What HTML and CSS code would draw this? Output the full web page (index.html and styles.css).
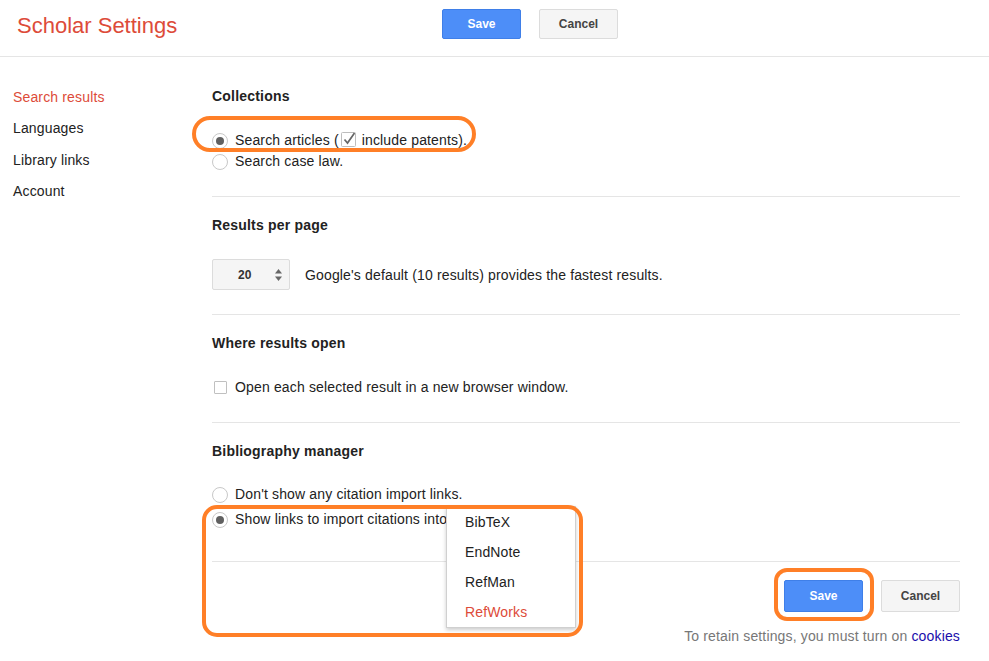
FILE: index.html
```html
<!DOCTYPE html>
<html lang="en">
<head>
<meta charset="utf-8">
<title>Scholar Settings</title>
<link rel="stylesheet" href="styles.css">
</head>
<body>
<header class="hdr">
  <h1 class="title">Scholar Settings</h1>
  <div class="btns">
    <button class="btn btn-primary">Save</button>
    <button class="btn">Cancel</button>
  </div>
</header>
<div class="layout">
  <nav class="side">
    <a class="side-link active" href="#">Search results</a>
    <a class="side-link" href="#">Languages</a>
    <a class="side-link" href="#">Library links</a>
    <a class="side-link" href="#">Account</a>
  </nav>
  <main class="main">
    <section class="sec sec-first">
      <h2 class="sec-title">Collections</h2>
      <div class="row marked">
        <span class="radio checked"></span>
        <span class="lbl">Search articles (<svg class="cb-inline" width="15" height="15" viewBox="0 0 15 15"><rect x="0.5" y="0.5" width="14" height="14" rx="1" fill="#fff" stroke="#bdbdbd"/><path d="M3.5 7.5 L6.5 11 L13.5 1" fill="none" stroke="#666" stroke-width="1.7"/></svg>&nbsp;include patents).</span>
        <span class="ring ring-1"></span>
      </div>
      <div class="row">
        <span class="radio"></span>
        <span class="lbl">Search case law.</span>
      </div>
    </section>

    <section class="sec">
      <h2 class="sec-title">Results per page</h2>
      <div class="sel-row">
        <div class="sel">
          <span class="sel-val">20</span>
          <svg class="spin" width="7" height="14" viewBox="0 0 7 14"><path d="M0 5.5 L3.5 1 L7 5.5 Z" fill="#666"/><path d="M0 8.5 L3.5 13 L7 8.5 Z" fill="#666"/></svg>
        </div>
        <span class="lbl">Google's default (10 results) provides the fastest results.</span>
      </div>
    </section>

    <section class="sec">
      <h2 class="sec-title">Where results open</h2>
      <div class="row">
        <span class="cbox"></span>
        <span class="lbl">Open each selected result in a new browser window.</span>
      </div>
    </section>

    <section class="sec sec-last">
      <h2 class="sec-title">Bibliography manager</h2>
      <div class="row">
        <span class="radio"></span>
        <span class="lbl">Don't show any citation import links.</span>
      </div>
      <div class="row row-gap marked">
        <span class="radio checked"></span>
        <span class="lbl">Show links to import citations into</span>
        <ul class="menu">
          <li class="menu-item">BibTeX</li>
          <li class="menu-item">EndNote</li>
          <li class="menu-item">RefMan</li>
          <li class="menu-item menu-item-sel">RefWorks</li>
        </ul>
        <span class="ring ring-2"></span>
      </div>
    </section>

    <div class="actions">
      <div class="marked">
        <button class="btn btn-primary btn-lg">Save</button>
        <span class="ring ring-3"></span>
      </div>
      <button class="btn btn-lg">Cancel</button>
    </div>
    <p class="note">To retain settings, you must turn on <a class="note-link" href="#">cookies</a></p>
  </main>
</div>
</body>
</html>
```

FILE: styles.css
```css
* { box-sizing: border-box; }

body {
  margin: 0;
  background: #fff;
  color: #222;
  font-family: "Liberation Sans", Arial, sans-serif;
  font-size: 14px;
  letter-spacing: 0.15px;
}

/* header */
.hdr {
  display: flex;
  align-items: flex-start;
  height: 57px;
  padding-top: 9px;
  border-bottom: 1px solid #e5e5e5;
}
.title {
  width: 442px;
  margin: 4px 0 0;
  padding-left: 17px;
  font-size: 22px;
  line-height: 25px;
  font-weight: normal;
  letter-spacing: 0;
  color: #dd4b39;
}
.btns {
  display: flex;
  gap: 18px;
}
.btn {
  width: 79px;
  height: 30px;
  border: 1px solid #dcdcdc;
  border-radius: 2px;
  background: #f5f5f5;
  color: #444;
  font-family: "Liberation Sans", Arial, sans-serif;
  font-size: 12px;
  font-weight: bold;
  padding: 0;
}
.btn-primary {
  background: #4d8ef8;
  border-color: #3f7fe8;
  color: #fff;
}
.btn-lg { height: 32px; }

/* layout */
.layout {
  display: flex;
}
.side {
  width: 212px;
  flex: none;
  padding: 25px 0 0 13px;
}
.side-link {
  display: block;
  line-height: 31.3px;
  color: #222;
  text-decoration: none;
}
.side-link.active { color: #dd4b39; }

.main {
  width: 748px;
  padding-top: 31px;
}

.sec {
  border-bottom: 1px solid #e5e5e5;
  padding: 20px 0 24px;
}
.sec-first { padding-top: 0; }
.sec-last { padding-bottom: 31px; }

.sec-title {
  margin: 0 0 26px;
  font-size: 14px;
  line-height: 16px;
  font-weight: bold;
  letter-spacing: 0.2px;
  color: #222;
}
.sec-last .sec-title { margin-bottom: 25px; }

.row {
  display: flex;
  align-items: center;
  height: 21px;
  line-height: 21px;
}
.row-gap { margin-top: 4px; }
.lbl { white-space: nowrap; }

.radio {
  width: 16px;
  height: 16px;
  flex: none;
  margin-right: 7px;
  border: 1px solid #c8c8c8;
  border-radius: 50%;
  background: #fff;
  display: flex;
  align-items: center;
  justify-content: center;
}
.radio.checked::after {
  content: "";
  width: 8px;
  height: 8px;
  border-radius: 50%;
  background: #606060;
}

.cb-inline {
  vertical-align: -2px;
  margin: 0 2px 0 2px;
  overflow: visible;
}

.cbox {
  width: 13px;
  height: 13px;
  flex: none;
  margin: 0 8px 0 2px;
  border: 1px solid #c0c0c0;
  border-radius: 1px;
  background: #fff;
}

/* select */
.sel-row {
  display: flex;
  align-items: center;
  gap: 15px;
}
.sel {
  width: 78px;
  height: 31px;
  display: flex;
  align-items: center;
  padding-left: 25px;
  border: 1px solid #dcdcdc;
  border-radius: 2px;
  background: #f5f5f5;
}
.sel-val {
  font-size: 12px;
  font-weight: bold;
  color: #333;
  width: 37px;
}
.spin { display: block; }

/* dropdown menu */
.marked { position: relative; }
.menu {
  position: absolute;
  left: 234px;
  top: -3px;
  width: 130px;
  margin: 0;
  padding: 0;
  list-style: none;
  background: #fff;
  border: 1px solid #d0d0d0;
  box-shadow: 0 2px 4px rgba(0, 0, 0, 0.2);
  z-index: 2;
}
.menu-item {
  height: 30px;
  line-height: 30px;
  padding-left: 18px;
  color: #222;
}
.menu-item-sel { color: #dd4b39; }

/* annotation rings */
.ring {
  position: absolute;
  border: 4px solid #ff7f27;
  pointer-events: none;
  z-index: 3;
}
.ring-1 {
  left: -20px;
  top: -14px;
  width: 284px;
  height: 36px;
  border-radius: 18px;
}
.ring-2 {
  left: -10px;
  top: -4px;
  width: 381px;
  height: 132px;
  border-radius: 15px;
}
.ring-3 {
  left: -10px;
  top: -12px;
  width: 100px;
  height: 53px;
  border-radius: 13px;
}

/* bottom actions */
.actions {
  display: flex;
  justify-content: flex-end;
  gap: 18px;
  margin-top: 18px;
}
.actions .marked { display: flex; }

.note {
  margin: 16px 0 0;
  text-align: right;
  line-height: 16px;
  color: #777;
}
.note-link {
  color: #1a0dab;
  text-decoration: none;
}
```
